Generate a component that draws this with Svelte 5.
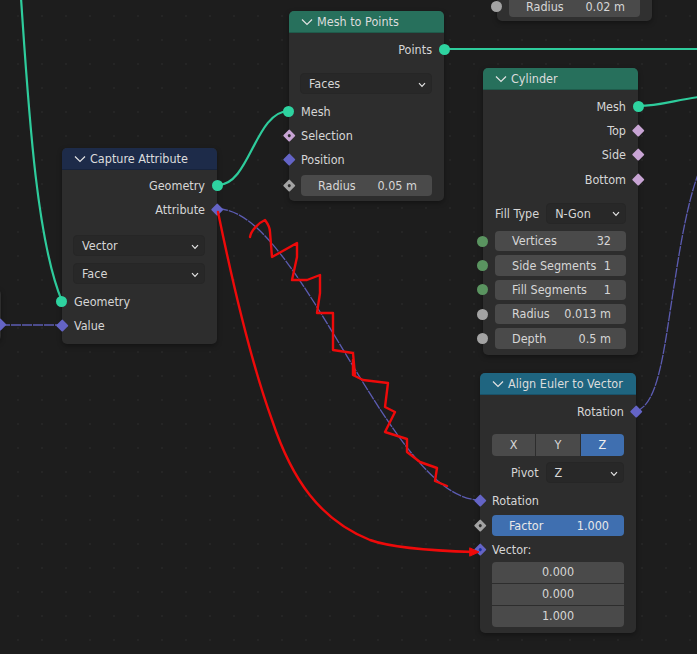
<script>
  const zig = "M250 237 C251 231 258 223 265 220 C268 224 270 228 270 232 L272 257 L297 243 L297 257 L292 280 L307 280 L320 275 L320 293 L317 313 L333 313 L333 350 L353 353 L355 375 L353 360 L353 375 L363 380 L388 383 L385 407 L395 412 L385 432 L407 439 L407 452 L420 462 L437 468 L435 481 L447 486";
</script>

{#snippet sock(kind)}
  <span class="sock {kind}"></span>
{/snippet}

{#snippet chev()}
  <svg class="chev" viewBox="0 0 12 8" width="12" height="8"><path d="M1 1.5 L6 6.5 L11 1.5" /></svg>
{/snippet}

{#snippet drop(text)}
  <div class="drop"><span>{text}</span><svg class="dchev" viewBox="0 0 8 6" width="8" height="6"><path d="M1 1.2 L4 4.4 L7 1.2" /></svg></div>
{/snippet}

{#snippet field(label, value, kind)}
  <div class="fieldrow">
    {#if kind}{@render sock(kind)}{/if}
    <div class="field"><span>{label}</span><span>{value}</span></div>
  </div>
{/snippet}

<div class="canvas">
  <svg class="layer wires" viewBox="0 0 697 654" width="697" height="654">
    <g class="green">
      <path d="M21 -2 C28 100 36 240 62 301" />
      <path d="M218 185 C250 185 255 111 289 111" />
      <path d="M445 49 L697 49" />
      <path d="M638 106 C660 106 675 100 699 97" />
    </g>
    <g class="blue">
      <path d="M0 325 L62 325" />
      <path d="M218 209 C300 209 390 500 480 500" />
      <path d="M636 411 C660 405 665 340 675 280 C681 240 690 190 702 165" />
    </g>
  </svg>

  <div class="node cut-top">
    <div class="fieldrow">{@render sock("float")}<div class="field"><span>Radius</span><span>0.02 m</span></div></div>
  </div>
  <div class="node cut-left"></div>
  <span class="sock vector stray"></span>

  <section class="node capture">
    <header class="hd navy">{@render chev()}<span>Capture Attribute</span></header>
    <div class="row out">Geometry{@render sock("geo")}</div>
    <div class="row out">Attribute{@render sock("vector")}</div>
    <div class="stack cap-stack">
      {@render drop("Vector")}
      {@render drop("Face")}
    </div>
    <div class="row">{@render sock("geo")}Geometry</div>
    <div class="row">{@render sock("vector")}Value</div>
  </section>

  <section class="node points">
    <header class="hd teal">{@render chev()}<span>Mesh to Points</span></header>
    <div class="row out">Points{@render sock("geo")}</div>
    <div class="stack pts-stack">{@render drop("Faces")}</div>
    <div class="row">{@render sock("geo")}Mesh</div>
    <div class="row">{@render sock("bool dot")}Selection</div>
    <div class="row">{@render sock("vector")}Position</div>
    {@render field("Radius", "0.05 m", "float dot")}
  </section>

  <section class="node cylinder">
    <header class="hd teal">{@render chev()}<span>Cylinder</span></header>
    <div class="row out">Mesh{@render sock("geo")}</div>
    <div class="row out">Top{@render sock("bool")}</div>
    <div class="row out">Side{@render sock("bool")}</div>
    <div class="row out">Bottom{@render sock("bool")}</div>
    <div class="labelled cyl-type"><span>Fill Type</span>{@render drop("N-Gon")}</div>
    <div class="cyl-fields">
      {@render field("Vertices", "32", "int")}
      {@render field("Side Segments", "1", "int")}
      {@render field("Fill Segments", "1", "int")}
      {@render field("Radius", "0.013 m", "float")}
      {@render field("Depth", "0.5 m", "float")}
    </div>
  </section>

  <section class="node align">
    <header class="hd petrol">{@render chev()}<span>Align Euler to Vector</span></header>
    <div class="row out">Rotation{@render sock("vector")}</div>
    <div class="seg"><span>X</span><span>Y</span><span class="on">Z</span></div>
    <div class="labelled pivot"><span>Pivot</span>{@render drop("Z")}</div>
    <div class="row rot">{@render sock("vector")}Rotation</div>
    <div class="fieldrow factor">
      {@render sock("float dot")}
      <div class="field active"><span>Factor</span><span>1.000</span></div>
    </div>
    <div class="row vec">{@render sock("vector bluedot")}Vector:</div>
    <div class="vals"><span>0.000</span><span>0.000</span><span>1.000</span></div>
  </section>

  <svg class="layer ink" viewBox="0 0 697 654" width="697" height="654">
    <path d={zig} />
    <path d="M218 212 C232 280 252 365 272 420 C292 480 320 520 370 540 C395 549 440 551 474 552" />
    <path class="head" d="M470 548 L479 552 L470 556 Z" />
  </svg>
</div>

<style>
  :global(body) { margin: 0; background: #1d1d1d; overflow: hidden; }

  .canvas {
    position: relative;
    width: 697px;
    height: 654px;
    overflow: hidden;
    background-color: #1d1d1d;
    background-image: radial-gradient(circle, #252525 0.8px, transparent 1.2px);
    background-size: 24px 24px;
    background-position: 6px 4px;
    font-family: "DejaVu Sans", sans-serif;
    font-stretch: condensed;
    font-size: 12.5px;
    line-height: 1;
    color: #d6d6d6;
  }
  .layer { position: absolute; left: 0; top: 0; pointer-events: none; }
  .ink { z-index: 5; }
  .wires path { fill: none; }
  .green path { stroke: #2ecc9c; stroke-width: 2.2; }
  .blue path { stroke: #5c5cb2; stroke-width: 1.3; stroke-dasharray: 10 1; }
  .ink path { fill: none; stroke: #ee0a0a; stroke-width: 2.4; stroke-linejoin: round; stroke-linecap: round; }
  .ink .head { fill: #ee0a0a; stroke-width: 1; }

  .node {
    position: absolute;
    box-sizing: border-box;
    width: 155px;
    background: #2d2d2d;
    border-radius: 5px;
    box-shadow: 0 2px 5px rgba(0, 0, 0, 0.35);
  }
  .capture { left: 62px; top: 148px; height: 196px; }
  .points { left: 289px; top: 11px; height: 190px; }
  .cylinder { left: 483px; top: 68px; height: 287px; }
  .align { left: 480px; top: 373px; width: 156px; height: 260px; }
  .cut-top { left: 497px; top: -30px; height: 51px; padding-top: 26px; background: #303030; }
  .cut-left { left: -100px; top: 289px; width: 101px; height: 52px; }
  .stray { position: absolute; left: -5px; top: 320px; z-index: 2; }

  .hd {
    display: flex;
    align-items: center;
    gap: 4px;
    height: 22px;
    padding-left: 12px;
    border-radius: 5px 5px 0 0;
    color: #dcdcdc;
    box-shadow: inset 0 -1px 0 rgba(0, 0, 0, 0.18);
  }
  .navy { background: #1d2b49; }
  .teal { background: #27705c; }
  .petrol { background: #1f6580; }
  .chev { flex: none; }
  .chev path, .dchev path { fill: none; stroke: #e2e2e2; stroke-width: 1.2; }

  .row {
    position: relative;
    box-sizing: border-box;
    display: flex;
    align-items: center;
    height: 24px;
    padding: 2px 12px 0;
  }
  .row.out { justify-content: flex-end; }
  .hd + .row { margin-top: 4px; }
  .capture .hd + .row { margin-top: 3px; }
  .cylinder .row { height: 24.3px; }

  .sock {
    position: absolute;
    left: -6px;
    width: 11px;
    height: 11px;
    box-sizing: border-box;
    z-index: 3;
  }
  .row > .sock { margin-top: -2px; }
  .row.out > .sock { left: auto; right: -6px; }
  .geo { border-radius: 50%; background: #2ed3a0; }
  .float, .int { border-radius: 50%; }
  .float { background: #a3a3a3; }
  .int { background: #5a9460; }
  .vector, .bool, .float.dot {
    width: 8.5px;
    height: 8.5px;
    left: -4px;
    transform: rotate(45deg);
    border-radius: 1px;
  }
  .row.out > .vector, .row.out > .bool { right: -4px; }
  .vector { background: #6464c6; }
  .bool { background: #c8a4d4; }
  .dot::after, .bluedot::after {
    content: "";
    position: absolute;
    left: 2.75px;
    top: 2.75px;
    width: 3px;
    height: 3px;
    border-radius: 50%;
    background: #2d2d2d;
  }
  .bluedot::after { background: #1a2fa0; }

  .stack { display: flex; flex-direction: column; gap: 7px; padding: 0 12px 0 11px; }
  .cap-stack { margin: 14px 0 5px; }
  .pts-stack { margin: 12px 0 5px; }
  .stack .drop { flex: none; }
  .drop {
    flex: 1;
    box-sizing: border-box;
    display: flex;
    align-items: center;
    justify-content: space-between;
    height: 21px;
    padding: 2px 5px 0 8px;
    background: #282828;
    border: 1px solid #262626;
    border-radius: 4px;
    color: #d6d6d6;
  }

  .fieldrow {
    position: relative;
    display: flex;
    align-items: center;
    padding: 0 12px;
  }
  .fieldrow > .sock { left: -6px; }
  .fieldrow > .dot { left: -4px; }
  .field {
    flex: 1;
    box-sizing: border-box;
    display: flex;
    align-items: center;
    justify-content: space-between;
    height: 20.5px;
    padding: 1px 15px 0 17px;
    background: #4a4a4a;
    border-radius: 4px;
    white-space: nowrap;
  }
  .field.active { background: #3f6fb0; color: #e8e8e8; }
  .points .fieldrow { margin-top: 4px; }
  .factor { margin-top: 3px; }

  .labelled {
    display: flex;
    align-items: center;
    padding: 0 12px;
  }
  .labelled > span { white-space: nowrap; padding-top: 2px; }
  .cyl-type { margin-top: 11.8px; gap: 7px; }
  .cyl-fields { display: flex; flex-direction: column; gap: 3.8px; margin-top: 7px; }
  .pivot { margin-top: 6px; padding-left: 31px; gap: 7px; }

  .seg {
    display: flex;
    gap: 1px;
    margin: 11px 12px 0;
    height: 22px;
    border-radius: 4px;
    overflow: hidden;
  }
  .seg span {
    flex: 1;
    display: flex;
    align-items: center;
    justify-content: center;
    background: #4a4a4a;
  }
  .seg .on { background: #3f6fb0; color: #eee; }
  .rot { margin-top: 5px; }
  .vec { height: 26.5px; }
  .vals {
    display: flex;
    flex-direction: column;
    gap: 1px;
    margin: 0 12px;
    border-radius: 4px;
    overflow: hidden;
  }
  .vals span {
    display: flex;
    align-items: center;
    justify-content: center;
    height: 21px;
    background: #4a4a4a;
  }
</style>
